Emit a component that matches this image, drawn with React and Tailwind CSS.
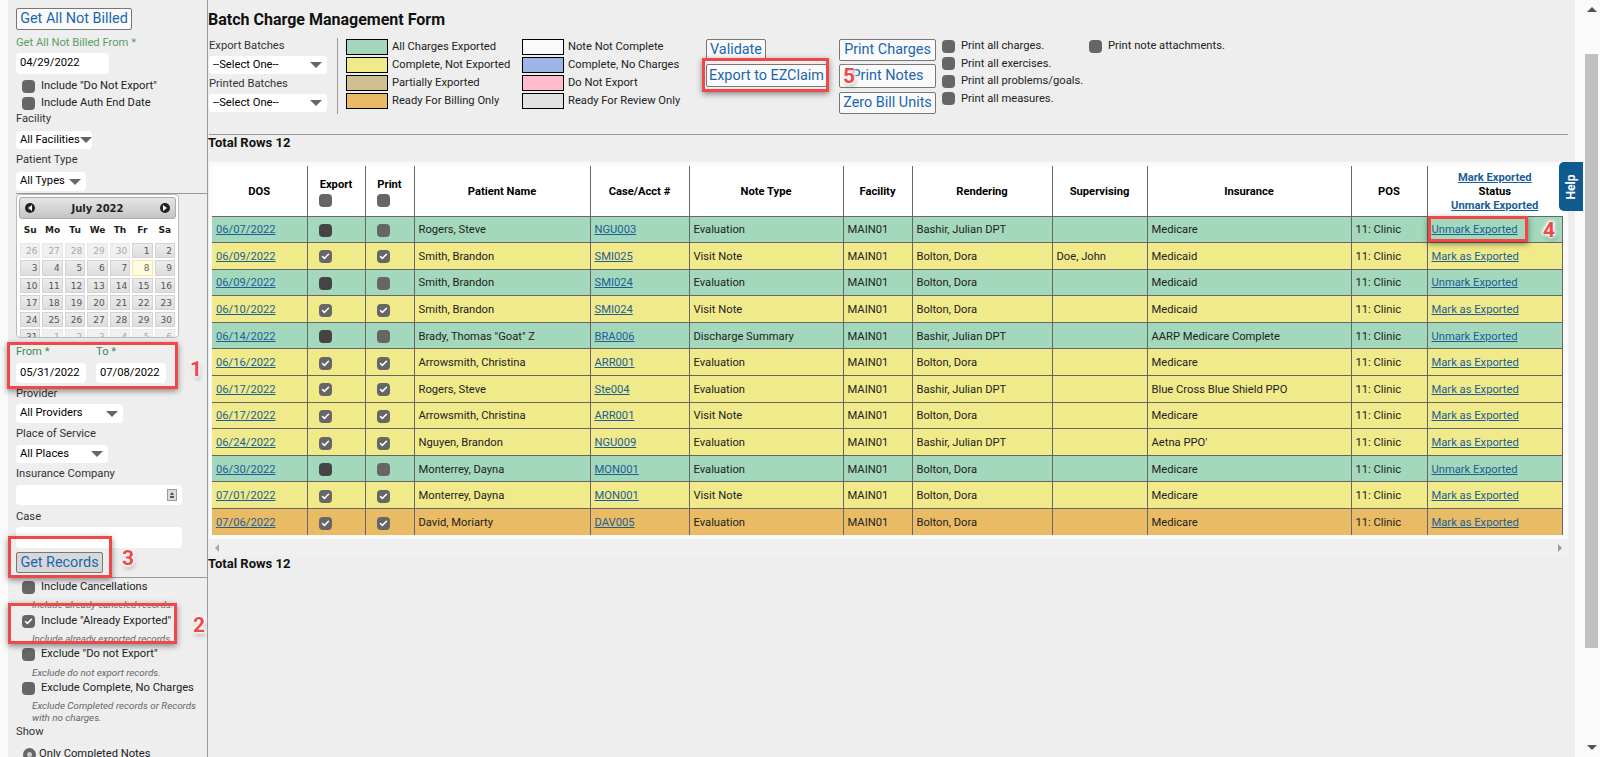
import { Check } from 'lucide-react'

const rows = [
  ['06/07/2022', false, 'Rogers, Steve', 'NGU003', 'Evaluation', 'Bashir, Julian DPT', '', 'Medicare', 'Unmark Exported', 'bg-[#a3d8bc]'],
  ['06/09/2022', true, 'Smith, Brandon', 'SMI025', 'Visit Note', 'Bolton, Dora', 'Doe, John', 'Medicaid', 'Mark as Exported', 'bg-[#f0ea8a]'],
  ['06/09/2022', false, 'Smith, Brandon', 'SMI024', 'Evaluation', 'Bolton, Dora', '', 'Medicaid', 'Unmark Exported', 'bg-[#a3d8bc]'],
  ['06/10/2022', true, 'Smith, Brandon', 'SMI024', 'Visit Note', 'Bolton, Dora', '', 'Medicaid', 'Mark as Exported', 'bg-[#f0ea8a]'],
  ['06/14/2022', false, 'Brady, Thomas "Goat" Z', 'BRA006', 'Discharge Summary', 'Bashir, Julian DPT', '', 'AARP Medicare Complete', 'Unmark Exported', 'bg-[#a3d8bc]'],
  ['06/16/2022', true, 'Arrowsmith, Christina', 'ARR001', 'Evaluation', 'Bolton, Dora', '', 'Medicare', 'Mark as Exported', 'bg-[#f0ea8a]'],
  ['06/17/2022', true, 'Rogers, Steve', 'Ste004', 'Evaluation', 'Bashir, Julian DPT', '', 'Blue Cross Blue Shield PPO', 'Mark as Exported', 'bg-[#f0ea8a]'],
  ['06/17/2022', true, 'Arrowsmith, Christina', 'ARR001', 'Visit Note', 'Bolton, Dora', '', 'Medicare', 'Mark as Exported', 'bg-[#f0ea8a]'],
  ['06/24/2022', true, 'Nguyen, Brandon', 'NGU009', 'Evaluation', 'Bashir, Julian DPT', '', "Aetna PPO'", 'Mark as Exported', 'bg-[#f0ea8a]'],
  ['06/30/2022', false, 'Monterrey, Dayna', 'MON001', 'Evaluation', 'Bolton, Dora', '', 'Medicare', 'Unmark Exported', 'bg-[#a3d8bc]'],
  ['07/01/2022', true, 'Monterrey, Dayna', 'MON001', 'Visit Note', 'Bolton, Dora', '', 'Medicare', 'Mark as Exported', 'bg-[#f0ea8a]'],
  ['07/06/2022', true, 'David, Moriarty', 'DAV005', 'Evaluation', 'Bolton, Dora', '', 'Medicare', 'Mark as Exported', 'bg-[#e9bb64]'],
]

const legendLeft = [
  ['All Charges Exported', 'bg-[#a3d8bc]'],
  ['Complete, Not Exported', 'bg-[#f0ea8a]'],
  ['Partially Exported', 'bg-[#cfc18f]'],
  ['Ready For Billing Only', 'bg-[#e9bb64]'],
]
const legendRight = [
  ['Note Not Complete', 'bg-[#fafafa]'],
  ['Complete, No Charges', 'bg-[#9cb4e6]'],
  ['Do Not Export', 'bg-[#ffbccb]'],
  ['Ready For Review Only', 'bg-[#e2e2e2]'],
]
const headers = ['DOS', 'Export', 'Print', 'Patient Name', 'Case/Acct #', 'Note Type', 'Facility', 'Rendering', 'Supervising', 'Insurance', 'POS', 'Status']
const widths = ['w-[95px]', 'w-[58px]', 'w-[49px]', 'w-[176px]', 'w-[99px]', 'w-[154px]', 'w-[69px]', 'w-[140px]', 'w-[95px]', 'w-[204px]', 'w-[76px]', 'w-[135px]']
const weeks = [
  [[26, 1], [27, 1], [28, 1], [29, 1], [30, 1], [1, 0], [2, 0]],
  [[3, 0], [4, 0], [5, 0], [6, 0], [7, 0], [8, 2], [9, 0]],
  [[10, 0], [11, 0], [12, 0], [13, 0], [14, 0], [15, 0], [16, 0]],
  [[17, 0], [18, 0], [19, 0], [20, 0], [21, 0], [22, 0], [23, 0]],
  [[24, 0], [25, 0], [26, 0], [27, 0], [28, 0], [29, 0], [30, 0]],
  [[31, 0], [1, 1], [2, 1], [3, 1], [4, 1], [5, 1], [6, 1]],
]

function Box({ checked, dark, className = '' }) {
  return (
    <span className={`inline-flex h-[13px] w-[13px] shrink-0 items-center justify-center rounded-[4px] ${dark ? 'bg-[#444]' : 'bg-[#666]'} ${className}`}>
      {checked && <Check size={9} strokeWidth={4} className="text-white" />}
    </span>
  )
}

function Arrow() {
  return (
    <svg width="12" height="6" viewBox="0 0 12 6" className="shrink-0">
      <path d="M0 0h12L6 6z" fill="#666" />
    </svg>
  )
}

function Select({ label, className }) {
  return (
    <div className={`flex items-center justify-between rounded-[4px] bg-white pl-[4px] pr-[5px] text-[11.2px] text-black ${className}`}>
      <span className="whitespace-nowrap">{label}</span>
      <Arrow />
    </div>
  )
}

function Label({ children, className = '' }) {
  return <div className={`h-[11px] whitespace-nowrap text-[11.2px] leading-[11px] text-[#333] ${className}`}>{children}</div>
}

function Btn({ children, className = 'bg-[#fafafa]' }) {
  return (
    <div className={`flex items-center justify-center whitespace-nowrap rounded-[2px] border border-[#777] text-[14.4px] text-[#1a67b0] ${className}`}>
      {children}
    </div>
  )
}

function CheckRow({ label, checked, className = '' }) {
  return (
    <div className={`flex items-center gap-[6px] pl-[14px] text-[11.2px] leading-[14px] text-[#222] ${className}`}>
      <Box checked={checked} />
      <span className="whitespace-nowrap">{label}</span>
    </div>
  )
}

function Note({ children, className = '' }) {
  return <div className={`pl-[24px] text-[9.8px] italic leading-[12px] text-[#666] ${className}`}>{children}</div>
}

function Calendar() {
  return (
    <div className="ml-[8px] h-[144px] w-[163px] overflow-hidden rounded-[4px] border border-[#bbb] bg-white px-[2px] pt-[2px] font-['DejaVu_Sans',sans-serif]">
      <div className="flex h-[22px] items-center justify-between rounded-[3px] border border-[#aaa] bg-gradient-to-b from-[#e6e6e6] to-[#c4c4c4] px-[5px]">
        <span className="flex h-[10px] w-[10px] items-center justify-center rounded-full bg-[#222]"><span className="h-0 w-0 border-y-[3px] border-r-[4px] border-y-transparent border-r-white" /></span>
        <span className="text-[10px] font-bold text-[#222]">July 2022</span>
        <span className="flex h-[10px] w-[10px] items-center justify-center rounded-full bg-[#222]"><span className="h-0 w-0 border-y-[3px] border-l-[4px] border-y-transparent border-l-white" /></span>
      </div>
      <div className="mt-[5px] grid grid-cols-7 gap-x-[2px] px-[1px] text-center text-[9px] font-bold leading-[13px] text-[#222]">
        {['Su', 'Mo', 'Tu', 'We', 'Th', 'Fr', 'Sa'].map((d) => <span key={d}>{d}</span>)}
      </div>
      <div className="mt-[6px] flex flex-col gap-[2px] px-[1px]">
        {weeks.map((week, i) => (
          <div key={i} className="grid grid-cols-7 gap-x-[2px]">
            {week.map(([day, kind], j) => (
              <div
                key={j}
                className={`h-[15.3px] border pr-[2px] text-right text-[9px] leading-[14px] ${
                  kind === 2
                    ? 'border-[#f5e6a0] bg-[#fffbe0] text-[#666]'
                    : kind === 1
                      ? 'border-[#e8e8e8] bg-[#f0f0f0] text-[#aaa]'
                      : 'border-[#d3d3d3] bg-gradient-to-b from-[#ececec] to-[#dedede] text-[#555]'
                }`}
              >
                {day}
              </div>
            ))}
          </div>
        ))}
      </div>
    </div>
  )
}

function Sidebar() {
  return (
    <aside className="ml-[8px] h-full w-[200px] shrink-0 overflow-hidden border-r border-[#999] bg-[#eee]">
      <Btn className="ml-[8px] mt-[8px] h-[22px] w-[116px] bg-[#fafafa]">Get All Not Billed</Btn>
      <div className="ml-[8px] mt-[7px] h-[11px] whitespace-nowrap text-[11.2px] leading-[11px] text-[#5a9e68]">Get All Not Billed From *</div>
      <div className="ml-[8px] mt-[5px] flex h-[21px] w-[93px] items-center rounded-[4px] bg-white pl-[4px] text-[11.2px] text-black">04/29/2022</div>
      <CheckRow label={'Include "Do Not Export"'} className="mt-[4px] h-[16px]" />
      <CheckRow label="Include Auth End Date" className="mt-[1px] h-[16px]" />
      <Label className="ml-[8px] mt-[2px]">Facility</Label>
      <Select label="All Facilities" className="ml-[8px] mt-[7px] h-[18px] w-[76px]" />
      <Label className="ml-[8px] mt-[5px]">Patient Type</Label>
      <Select label="All Types" className="ml-[8px] mt-[7px] h-[19px] w-[70px]" />
      <div className="ml-[8px] mt-[2px] h-px bg-[#999]" />
      <Calendar />
      <div className="ml-[8px] mt-[8px] flex gap-[10px]">
        <div>
          <div className="h-[11px] text-[11.2px] leading-[11px] text-[#3f8a55]">From *</div>
          <div className="mt-[6px] flex h-[20px] w-[70px] items-center rounded-[4px] bg-white pl-[4px] text-[11.2px] text-black">05/31/2022</div>
        </div>
        <div>
          <div className="h-[11px] text-[11.2px] leading-[11px] text-[#3f8a55]">To *</div>
          <div className="mt-[6px] flex h-[20px] w-[70px] items-center rounded-[4px] bg-white pl-[4px] text-[11.2px] text-black">07/08/2022</div>
        </div>
      </div>
      <Label className="ml-[8px] mt-[5px]">Provider</Label>
      <Select label="All Providers" className="ml-[8px] mt-[5px] h-[19px] w-[107px]" />
      <Label className="ml-[8px] mt-[5px]">Place of Service</Label>
      <Select label="All Places" className="ml-[8px] mt-[6px] h-[18px] w-[92px]" />
      <Label className="ml-[8px] mt-[5px]">Insurance Company</Label>
      <div className="ml-[8px] mt-[6px] flex h-[20px] w-[166px] items-center justify-end rounded-[4px] bg-white pr-[5px]">
        <span className="flex h-[12px] w-[10px] flex-col items-center justify-center gap-[1px] border border-[#999] bg-[#ddd]">
          <span className="h-0 w-0 border-x-[2px] border-b-[3px] border-x-transparent border-b-[#555]" />
          <span className="h-[2px] w-[4px] bg-[#555]" />
        </span>
      </div>
      <Label className="ml-[8px] mt-[6px]">Case</Label>
      <div className="ml-[8px] mt-[5px] h-[21px] w-[166px] rounded-[4px] bg-white" />
      <Btn className="ml-[8px] mt-[4px] h-[21px] w-[87px] bg-[#d8d8d8]">Get Records</Btn>
      <div className="ml-[8px] mt-[4px] h-px bg-[#999]" />
      <CheckRow label="Include Cancellations" className="mt-[2px] h-[14px]" />
      <Note className="mt-[5px]">Include already canceled records.</Note>
      <CheckRow label={'Include "Already Exported"'} className="mt-[3px] h-[14px]" checked />
      <Note className="mt-[5px]">Include already exported records.</Note>
      <CheckRow label={'Exclude "Do not Export"'} className="mt-[2px] h-[14px]" />
      <Note className="mt-[6px]">Exclude do not export records.</Note>
      <CheckRow label="Exclude Complete, No Charges" className="mt-[2px] h-[14px]" />
      <Note className="mt-[5px]">Exclude Completed records or Records with no charges.</Note>
      <Label className="ml-[8px] mt-[2px]">Show</Label>
      <div className="ml-[15px] mt-[10px] flex items-center gap-[3px] text-[11.2px] leading-[14px] text-[#222]">
        <span className="flex h-[13px] w-[13px] items-center justify-center rounded-full bg-[#666]"><span className="h-[5px] w-[5px] rounded-full bg-[#ccc]" /></span>
        <span className="whitespace-nowrap">Only Completed Notes</span>
      </div>
    </aside>
  )
}

function LegendCol({ items, className }) {
  return (
    <div className={`flex flex-col gap-[2px] ${className}`}>
      {items.map(([label, color]) => (
        <div key={label} className="flex h-[16px] items-center gap-[4px] whitespace-nowrap text-[11.2px] text-[#222]">
          <span className={`h-[16px] w-[42px] border border-black ${color}`} />
          {label}
        </div>
      ))}
    </div>
  )
}

function TopBar() {
  return (
    <div className="flex h-[97px] items-start">
      <div className="w-[118px] shrink-0 pt-[2px]">
        <Label>Export Batches</Label>
        <Select label="--Select One--" className="mt-[5px] h-[18px] w-[118px]" />
        <Label className="mt-[4px]">Printed Batches</Label>
        <Select label="--Select One--" className="mt-[5px] h-[18px] w-[118px]" />
      </div>
      <div className="ml-[10px] h-[76px] w-px bg-[#999]" />
      <LegendCol items={legendLeft} className="ml-[8px] mt-[1px] w-[176px]" />
      <LegendCol items={legendRight} className="mt-[1px] w-[184px]" />
      <div className="mt-[1px] w-[133px] shrink-0">
        <Btn className="h-[21px] w-[60px] bg-[#fafafa]">Validate</Btn>
        <Btn className="mt-[4px] h-[23px] w-[121px] bg-[#fafafa]">Export to EZClaim</Btn>
      </div>
      <div className="mt-[1px] flex w-[103px] shrink-0 flex-col gap-[3px]">
        <Btn className="h-[22px] w-[97px] bg-[#fafafa]">Print Charges</Btn>
        <Btn className="h-[24px] w-[97px] bg-[#fafafa]">Print Notes</Btn>
        <Btn className="mt-[1px] h-[22px] w-[97px] bg-[#fafafa]">Zero Bill Units</Btn>
      </div>
      <div className="mt-[1px] flex w-[147px] shrink-0 flex-col gap-[3.6px] text-[11.2px] leading-[14px] text-[#222]">
        {['Print all charges.', 'Print all exercises.', 'Print all problems/goals.', 'Print all measures.'].map((t) => (
          <div key={t} className="flex items-center gap-[6px] whitespace-nowrap"><Box />{t}</div>
        ))}
      </div>
      <div className="mt-[1px] flex items-center gap-[6px] whitespace-nowrap text-[11.2px] leading-[14px] text-[#222]"><Box />Print note attachments.</div>
    </div>
  )
}

function ChargeTable() {
  return (
    <div className="mt-[12px] h-[394px] w-[1359px] bg-[#f0f0f0]">
      <div className="h-[377px] bg-[#fafafa] px-[3px] pt-[4px]">
        <table className="w-[1350px] table-fixed border-collapse text-[11.2px] leading-[14px] text-[#222]">
          <colgroup>
            {widths.map((w, i) => <col key={i} className={w} />)}
          </colgroup>
          <thead>
            <tr className="h-[50px] bg-white text-black">
              {headers.map((h, i) => (
                <th key={h} className={`px-0 pt-[3px] text-center text-[11.2px] font-bold ${i < 11 ? 'border-r border-[#666]' : ''}`}>
                  {h === 'Export' || h === 'Print' ? (
                    <div>
                      <div>{h}</div>
                      <div className="flex pl-[11px]"><Box className="mt-[2px]" /></div>
                    </div>
                  ) : h === 'Status' ? (
                    <div className="leading-[14px]">
                      <div><a className="text-[#1a5f96] underline">Mark Exported</a></div>
                      <div>Status</div>
                      <div><a className="text-[#1a5f96] underline">Unmark Exported</a></div>
                    </div>
                  ) : h}
                </th>
              ))}
            </tr>
          </thead>
          <tbody>
            {rows.map((r, i) => (
              <tr key={i} className={`h-[26.6px] border-t border-[#666] [&>td]:pt-[2px] ${r[9]}`}>
                <td className="border-r border-[#666] pl-[4px]"><a className="text-[#1a5f96] underline">{r[0]}</a></td>
                <td className="border-r border-[#666] pl-[11px]"><Box checked={r[1]} dark={!r[1]} className="align-middle" /></td>
                <td className="border-r border-[#666] pl-[11px]"><Box checked={r[1]} className="align-middle" /></td>
                <td className="whitespace-nowrap border-r border-[#666] pl-[4px]">{r[2]}</td>
                <td className="border-r border-[#666] pl-[4px]"><a className="text-[#1a5f96] underline">{r[3]}</a></td>
                <td className="whitespace-nowrap border-r border-[#666] pl-[4px]">{r[4]}</td>
                <td className="border-r border-[#666] pl-[4px]">MAIN01</td>
                <td className="whitespace-nowrap border-r border-[#666] pl-[4px]">{r[5]}</td>
                <td className="whitespace-nowrap border-r border-[#666] pl-[4px]">{r[6]}</td>
                <td className="whitespace-nowrap border-r border-[#666] pl-[4px]">{r[7]}</td>
                <td className="border-r border-[#666] pl-[4px]">11: Clinic</td>
                <td className="whitespace-nowrap border-r border-[#666] pl-[4px]"><a className="text-[#1a5f96] underline">{r[8]}</a></td>
              </tr>
            ))}
          </tbody>
        </table>
      </div>
      <div className="flex h-[17px] items-center justify-between px-[6px]">
        <span className="h-0 w-0 border-y-[4px] border-r-[4px] border-y-transparent border-r-[#aaa]" />
        <span className="h-0 w-0 border-y-[4px] border-l-[4px] border-y-transparent border-l-[#999]" />
      </div>
    </div>
  )
}

function Mark({ className }) {
  return <div className={`absolute border-[3px] border-[#f04848] shadow-[0_2px_6px_rgba(0,0,0,0.45)] ${className}`} />
}

function Num({ children, className }) {
  return (
    <div className={`absolute flex h-[20px] w-[20px] items-center justify-center text-[21px] font-bold leading-none text-[#f04848] [text-shadow:0_0_2px_#fff,0_0_3px_#fff,0_0_4px_#fff,0_0_4px_#fff,0_0_5px_#fff,1px_3px_4px_rgba(0,0,0,0.4)] ${className}`}>
      {children}
    </div>
  )
}

export default function App() {
  return (
    <div className="relative flex h-screen overflow-hidden bg-[#fafafa] font-['Roboto',sans-serif]">
      <Sidebar />
      <main className="h-full w-[1367px] shrink-0 overflow-hidden bg-[#eee]">
        <h1 className="mt-[10px] h-[20px] text-[16px] font-bold leading-[20px] text-[#111]">Batch Charge Management Form</h1>
        <div className="mt-[8px] pl-[1px]"><TopBar /></div>
        <div className="ml-[1px] -mt-px h-px w-[1359px] bg-[#999]" />
        <div className="mt-[1px] h-[14px] text-[13px] font-bold leading-[14px] text-[#111]">Total Rows 12</div>
        <div className="pl-[1px]"><ChargeTable /></div>
        <div className="mt-[1px] h-[14px] text-[13px] font-bold leading-[14px] text-[#111]">Total Rows 12</div>
      </main>
      <div className="ml-auto flex h-full w-[17px] flex-col items-center bg-[#fafafa] py-[7px]">
        <span className="h-0 w-0 border-x-[5px] border-b-[5px] border-x-transparent border-b-[#555]" />
        <div className="mt-[42px] h-[594px] w-[13px] bg-[#c1c1c1]" />
        <span className="mt-auto h-0 w-0 border-x-[5px] border-t-[5px] border-x-transparent border-t-[#555]" />
      </div>

      {/* annotations */}
      <Mark className="left-[7px] top-[342px] h-[47px] w-[171px]" />
      <Mark className="left-[8px] top-[536px] h-[42px] w-[104px]" />
      <Mark className="left-[8px] top-[603px] h-[41px] w-[169px]" />
      <Mark className="left-[1428px] top-[216px] h-[26px] w-[100px]" />
      <Mark className="left-[702px] top-[58px] h-[34px] w-[127px]" />
      <Num className="left-[186px] top-[359px]">1</Num>
      <Num className="left-[189px] top-[615px]">2</Num>
      <Num className="left-[118px] top-[548px]">3</Num>
      <Num className="left-[1539px] top-[220px]">4</Num>
      <Num className="left-[839px] top-[66px]">5</Num>
      <div className="absolute left-[1559px] top-[162px] flex h-[49px] w-[24px] items-center justify-center rounded-l-[5px] bg-[#0f5a8f]">
        <span className="-rotate-90 text-[12px] font-bold text-white">Help</span>
      </div>
    </div>
  )
}
